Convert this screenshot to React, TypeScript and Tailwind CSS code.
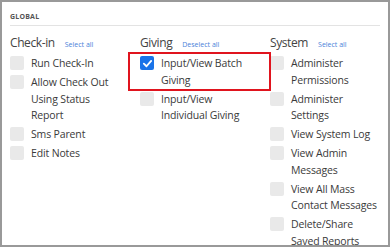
import React from 'react';

interface Group {
  title: string;
  action: string;
  items: { label: string; checked?: boolean; highlight?: boolean }[];
}

const groups: Group[] = [
  {
    title: 'Check-in',
    action: 'Select all',
    items: [
      { label: 'Run Check-In' },
      { label: 'Allow Check Out Using Status Report' },
      { label: 'Sms Parent' },
      { label: 'Edit Notes' },
    ],
  },
  {
    title: 'Giving',
    action: 'Deselect all',
    items: [
      { label: 'Input/View Batch Giving', checked: true, highlight: true },
      { label: 'Input/View Individual Giving' },
    ],
  },
  {
    title: 'System',
    action: 'Select all',
    items: [
      { label: 'Administer Permissions' },
      { label: 'Administer Settings' },
      { label: 'View System Log' },
      { label: 'View Admin Messages' },
      { label: 'View All Mass Contact Messages' },
      { label: 'Delete/Share Saved Reports' },
    ],
  },
];

function Checkbox({ checked }: { checked?: boolean }) {
  if (checked) {
    return (
      <span className="mt-[1px] flex h-[14px] w-[14px] shrink-0 items-center justify-center rounded-[2px] bg-[#1a73e8]">
        <svg width="11" height="11" viewBox="0 0 12 12" fill="none">
          <path d="M2 6.2 L4.9 9 L10 3.2" stroke="white" strokeWidth="2" strokeLinecap="round" strokeLinejoin="round" />
        </svg>
      </span>
    );
  }
  return <span className="mt-[1px] h-[14px] w-[14px] shrink-0 rounded-[2px] bg-[#e9e9e9]" />;
}

function Item({ label, checked }: { label: string; checked?: boolean }) {
  return (
    <label className="flex gap-[7px]">
      <Checkbox checked={checked} />
      <span className="w-[88px] text-[10.5px] leading-[16.5px] tracking-[-0.15px] text-[#3a3a3a]">{label}</span>
    </label>
  );
}

export default function App() {
  return (
    <div
      className="h-[247px] w-[390px] overflow-hidden border-2 border-[#999] bg-white"
      style={{ fontFamily: '"Open Sans", "Noto Sans", sans-serif' }}
    >
      <div className="px-[8px] pt-[10px]">
        <div className="border-b border-[#e3e3e3] pb-[3px] text-[7px] font-bold leading-[10px] tracking-[0.2px] text-[#555]">
          GLOBAL
        </div>
        <div className="grid grid-cols-[130px_130px_120px] pt-[8px]">
          {groups.map((g) => (
            <div key={g.title}>
              <div className="flex items-baseline gap-[10px] leading-[17px]">
                <span className="text-[12px] tracking-[-0.4px] text-[#444]">{g.title}</span>
                <span className="text-[7px] text-[#4a7fd9]">{g.action}</span>
              </div>
              <div className="mt-[2px] flex flex-col gap-[2.5px]">
                {g.items.map((it) =>
                  it.highlight ? (
                    <div key={it.label} className="relative">
                      <div className="absolute -left-[12px] -top-[3px] h-[39px] w-[143px] border-2 border-[#e0141e]" />
                      <Item label={it.label} checked={it.checked} />
                    </div>
                  ) : (
                    <Item key={it.label} label={it.label} checked={it.checked} />
                  )
                )}
              </div>
            </div>
          ))}
        </div>
      </div>
    </div>
  );
}
